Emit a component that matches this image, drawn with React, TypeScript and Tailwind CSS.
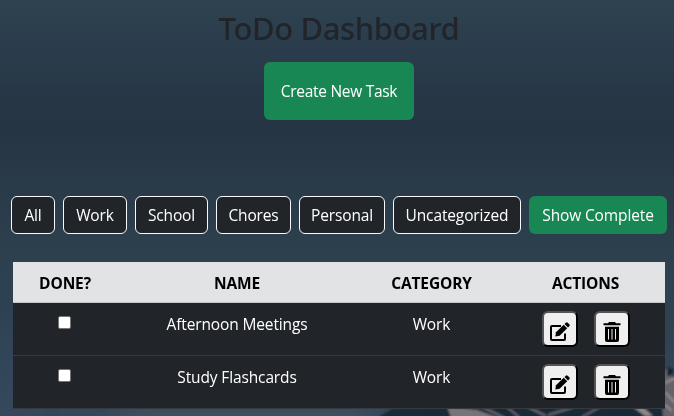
const filters = [
  { label: "All", box: "w-[44px]" },
  { label: "Work", box: "w-[64px]" },
  { label: "School", box: "w-[73px]" },
  { label: "Chores", box: "w-[75px]" },
  { label: "Personal", box: "w-[86px]" },
  { label: "Uncategorized", box: "w-[128px]" },
];

const tasks = [
  { name: "Afternoon Meetings", category: "Work" },
  { name: "Study Flashcards", category: "Work" },
];

const columns = "grid grid-cols-[104px_240px_149px_159px] text-center";
const iconButton =
  "flex h-9 w-9 items-end justify-center rounded-[6px] border-2 border-t-[#555] border-l-[#555] border-r-black border-b-black bg-[#efefef] text-black";

function EditIcon() {
  return (
    <svg className="mb-1 h-[19px] w-5" viewBox="0 0 20 19" fill="none">
      <path d="M11 4H1.9q-.9 0-.9.9V17q0 1 .9 1H14q1 0 1-1v-5.5" stroke="currentColor" strokeWidth="2" />
      <path d="M13.7 2.8l3.5 3.5-7.6 7.5-4.3.7.7-4.2Z" fill="currentColor" />
      <path d="M14.5 2l1.3-1.3q1-.8 1.9 0l1.6 1.6q.9 1 0 1.9L18 5.5Z" fill="currentColor" />
    </svg>
  );
}

function TrashIcon() {
  return (
    <svg className="mb-[3px] h-5 w-[18px]" viewBox="0 0 18 20" fill="none">
      <path d="M6 0h6l1 1.3h4.5v2H.5v-2H5Z" fill="currentColor" />
      <path d="M2 4.7h14V18q0 2-2 2H4q-2 0-2-2Z" fill="currentColor" />
      <path d="M5.5 7v10.5M9 7v10.5M12.5 7v10.5" stroke="#efefef" strokeWidth="1" />
    </svg>
  );
}

function Backdrop() {
  return (
    <svg className="absolute inset-0 h-full w-full" viewBox="0 0 674 416">
      <defs>
        <filter id="soft"><feGaussianBlur stdDeviation="1" /></filter>
        <filter id="haze"><feGaussianBlur stdDeviation="14" /></filter>
      </defs>
      <g filter="url(#haze)">
        <path d="M-20 320H30V430H-20Z" fill="#344862" opacity=".3" />
        <path d="M120 412H370V440H120Z" fill="#53636f" opacity=".5" />
      </g>
      <g filter="url(#soft)">
        <path d="M380 416l12-7 30-2h260v12H380Z" fill="#172b38" />
        <path d="M447 406l30 4 22 8h-48Z" fill="#77757a" />
        <path d="M480 406l25 12M507 407l12 10M528 407l18 9M548 415l26-8M582 417l18-10" stroke="#65676f" strokeWidth="2" />
        <path d="M633 407h10l10 9h-8Z" fill="#8e878a" />
        <path d="M661 371l8-2-1 6 10 4v38h-15Z" fill="#66626a" />
        <path d="M668 367l5 3-2 5-4 1Z" fill="#111e28" />
        <path d="M665 383l10-5M665 392l10 11M664 404l8 7" stroke="#938b90" strokeWidth="2" />
      </g>
    </svg>
  );
}

export default function App() {
  return (
    <main className="relative h-[416px] w-[674px] overflow-hidden bg-[linear-gradient(180deg,#2e4250_0px,#2b3d4c_45px,#273747_90px,#263544_130px,#293a49_185px,#2d404e_250px,#2e4252_330px,#34485b_416px)] font-['Open_Sans','Noto_Sans',sans-serif] text-[15.5px] tracking-[-0.13px] text-white">
      <Backdrop />
      <div className="relative flex flex-col">
        <h1 className="ml-[4px] mt-[9px] h-[38px] whitespace-nowrap text-center font-['Noto_Sans','Open_Sans',sans-serif] text-[31px] font-medium leading-[38px] tracking-[-0.4px] text-[#212529]">
          ToDo Dashboard
        </h1>
        <button className="mt-[15px] ml-[264px] h-[58px] w-[150px] whitespace-nowrap rounded-[6px] bg-[#198754] pt-[2px] tracking-[-0.3px]">
          Create New Task
        </button>
        <nav className="mt-[76px] ml-[11px] flex gap-2">
          {filters.map((f) => (
            <button key={f.label} className={`h-[38px] shrink-0 whitespace-nowrap rounded-[6px] border border-[#f8f9fa] bg-[#212529] pt-[2px] ${f.box}`}>
              {f.label}
            </button>
          ))}
          <button className="h-[38px] w-[138px] shrink-0 whitespace-nowrap rounded-[6px] bg-[#198754] pt-[2px]">
            Show Complete
          </button>
        </nav>
        <section className="mt-[28px] ml-[13px] w-[652px]">
          <header className={`${columns} h-[41px] border-b border-[#c4c8cb] bg-[#e2e3e5] font-bold leading-[42px] text-black`}>
            <span>DONE?</span>
            <span>NAME</span>
            <span>CATEGORY</span>
            <span>ACTIONS</span>
          </header>
          {tasks.map((t) => (
            <div key={t.name} className={`${columns} h-[53px] border-b border-[#373b3e] bg-[#212529] pt-2 leading-[26px]`}>
              <span className="flex justify-center pt-[5px] pr-[2px]">
                <input type="checkbox" className="m-0 h-[13px] w-[13px] appearance-none rounded-[2px] border border-[#767676] bg-white" />
              </span>
              <span className="whitespace-nowrap">{t.name}</span>
              <span>{t.category}</span>
              <span className="flex justify-center gap-4">
                <button aria-label="Edit" className={iconButton}>
                  <EditIcon />
                </button>
                <button aria-label="Delete" className={iconButton}>
                  <TrashIcon />
                </button>
              </span>
            </div>
          ))}
        </section>
      </div>
    </main>
  );
}
